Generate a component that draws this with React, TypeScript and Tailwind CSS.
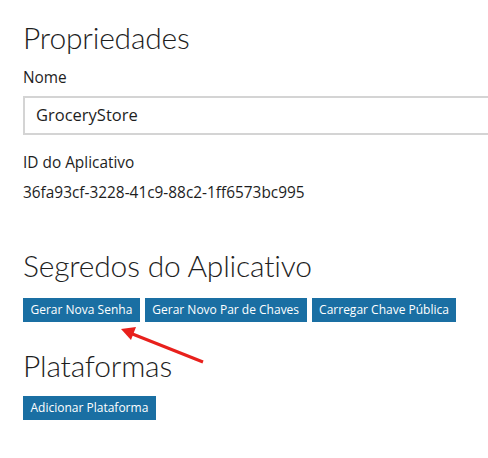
import React from 'react';

const Btn: React.FC<{ label: string }> = ({ label }) => (
  <button className="h-6 px-[7.5px] bg-[#1a6fa3] text-white text-[12px] leading-6 whitespace-nowrap">
    {label}
  </button>
);

const heading = 'text-[30px] leading-[38px] font-light tracking-[-0.2px]';

const App: React.FC = () => {
  return (
    <div
      className="relative w-[488px] h-[458px] overflow-hidden bg-white text-[#1e1e1e] pl-[23px]"
      style={{ fontFamily: '"Open Sans", "Noto Sans", sans-serif' }}
    >
      <h1 className={`pt-[18px] ${heading}`} style={{ fontFamily: 'Lato, sans-serif' }}>
        Propriedades
      </h1>

      <div className="mt-[12px] text-[15.4px] leading-5">Nome</div>
      <div className="mt-[8px] w-[500px] h-[39px] border-2 border-[#d4d4d4] pl-[11px] flex items-center text-[16.5px]">
        GroceryStore
      </div>

      <div className="mt-[18px] text-[15.4px] leading-5">ID do Aplicativo</div>
      <div className="mt-[10px] text-[15.4px] leading-5">36fa93cf-3228-41c9-88c2-1ff6573bc995</div>

      <h2 className={`mt-[43px] ${heading}`} style={{ fontFamily: 'Lato, sans-serif' }}>
        Segredos do Aplicativo
      </h2>
      <div className="mt-[14px] flex gap-[5px]">
        <Btn label="Gerar Nova Senha" />
        <Btn label="Gerar Novo Par de Chaves" />
        <Btn label="Carregar Chave Pública" />
      </div>

      <h2 className={`mt-[24px] ${heading}`} style={{ fontFamily: 'Lato, sans-serif' }}>
        Plataformas
      </h2>
      <div className="mt-[12px] flex">
        <Btn label="Adicionar Plataforma" />
      </div>

      <svg className="absolute left-0 top-0 pointer-events-none" width="488" height="458">
        <line x1="203" y1="362" x2="130" y2="333" stroke="#e8201c" strokeWidth="3" />
        <polygon points="121,329 136,327 131,340" fill="#e8201c" />
      </svg>
    </div>
  );
};

export default App;
